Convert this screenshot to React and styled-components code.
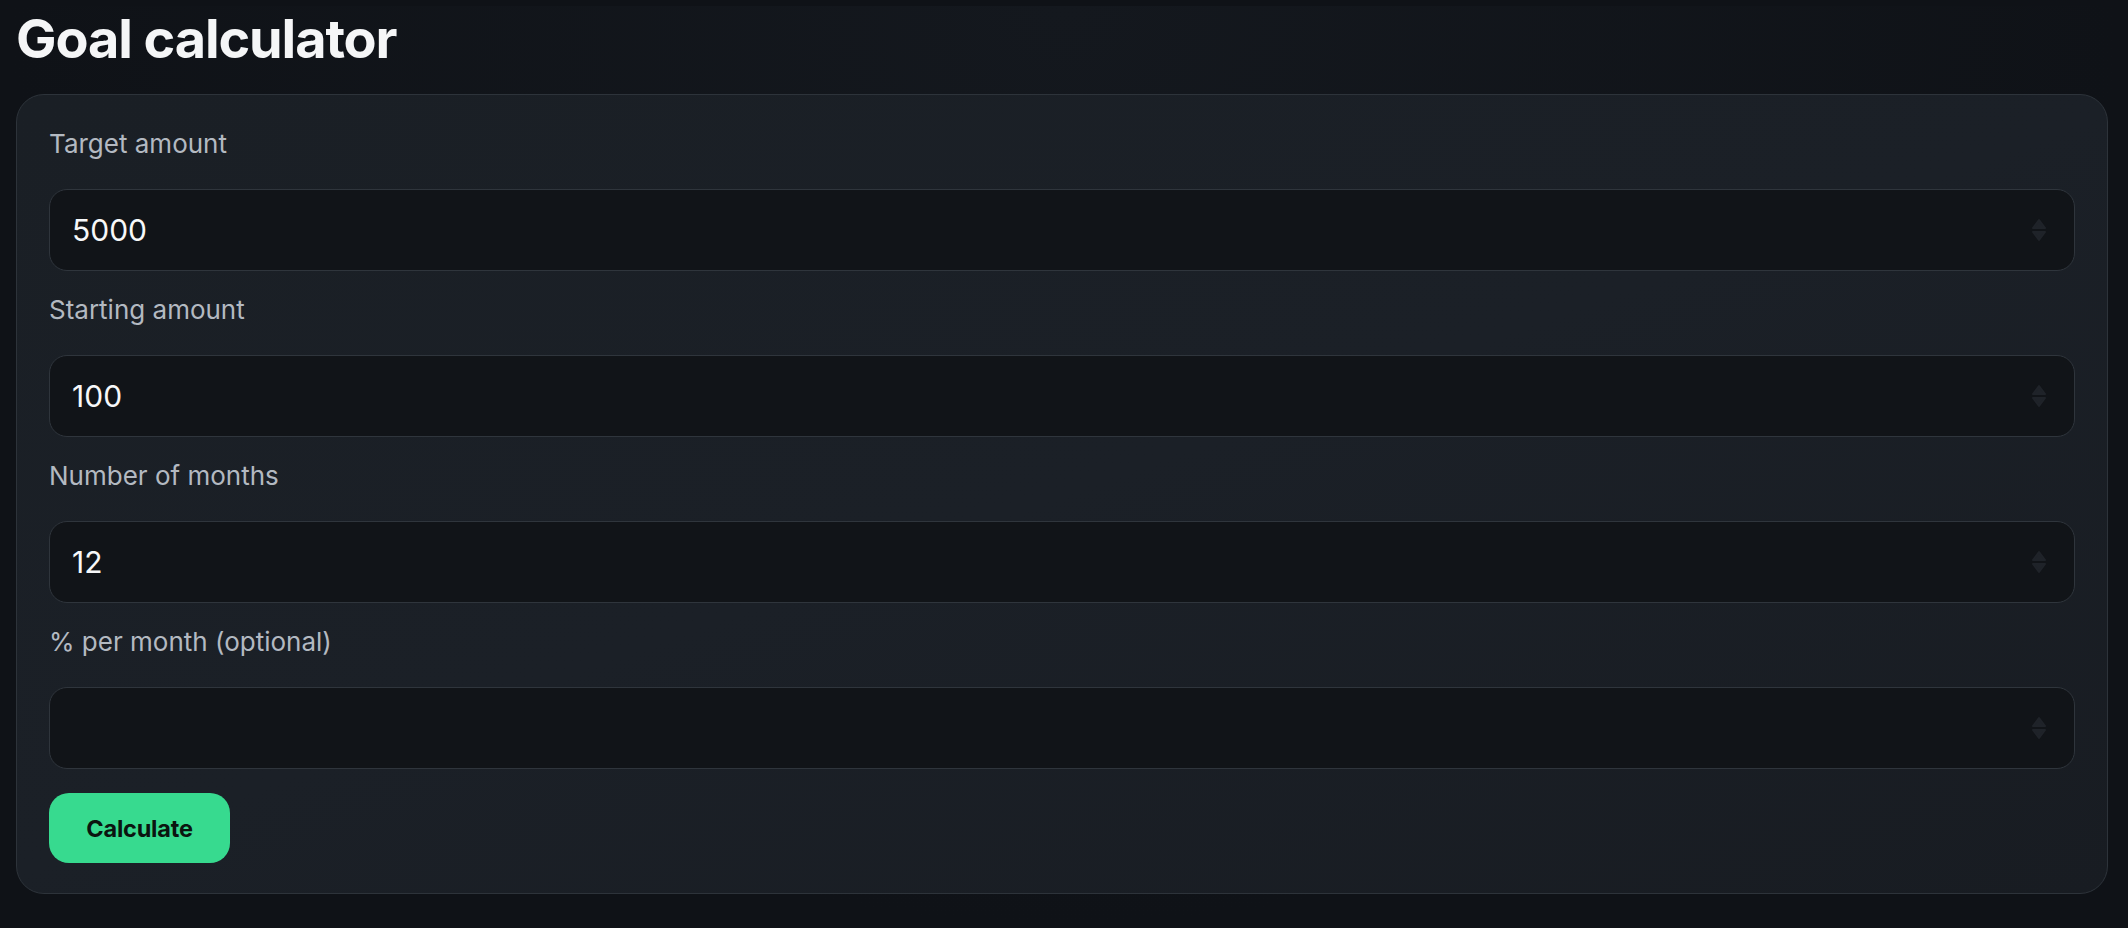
import React, { useState } from 'react';
import styled, { createGlobalStyle } from 'styled-components';

const GlobalStyle = createGlobalStyle`
  html, body {
    margin: 0;
    padding: 0;
    background: #0f1217;
  }
  body {
    font-family: Inter, "Noto Sans", "Liberation Sans", sans-serif;
    color: #f3f4f6;
    -webkit-font-smoothing: antialiased;
  }
  * {
    box-sizing: border-box;
  }
`;

const Page = styled.main`
  min-height: 928px;
  padding: 0 20px 0 16px;
  background: radial-gradient(ellipse at 50% 0%, #14181e 0%, #0f1217 70%);
`;

const Title = styled.h1`
  margin: 6px 0 23px;
  font-size: 54px;
  line-height: 65px;
  font-weight: 700;
  letter-spacing: -1.1px;
  color: #f5f6f7;
`;

const Card = styled.section`
  border: 1.5px solid #2d333a;
  border-radius: 28px;
  padding: 31px 32px 30px;
  background: linear-gradient(160deg, #1a1f25 0%, #1b2027 50%, #181c22 100%);
  display: flex;
  flex-direction: column;
`;

const Field = styled.div`
  display: flex;
  flex-direction: column;
  gap: 27px;
  margin-bottom: 21px;

  &:last-of-type {
    margin-bottom: 24px;
  }
`;

const Label = styled.label`
  font-size: 26px;
  line-height: 36px;
  color: #b3b9c1;
`;

const InputWrap = styled.div`
  position: relative;
`;

const Input = styled.input`
  width: 100%;
  height: 82px;
  padding: 0 60px 0 22px;
  border: 1.5px solid #2f353c;
  border-radius: 18px;
  background: #111418;
  color: #f7f8f9;
  font-family: inherit;
  font-size: 30px;
  outline: none;
  -moz-appearance: textfield;

  &::-webkit-outer-spin-button,
  &::-webkit-inner-spin-button {
    -webkit-appearance: none;
    margin: 0;
  }
`;

const Spinner = styled.svg`
  position: absolute;
  right: 28px;
  top: 50%;
  width: 16px;
  height: 26px;
  transform: translateY(-50%);
  pointer-events: none;
`;

const Button = styled.button`
  align-self: flex-start;
  width: 181px;
  height: 70px;
  border: none;
  border-radius: 20px;
  background: #37da8f;
  color: #0b1510;
  font-family: inherit;
  font-size: 23.5px;
  font-weight: 700;
  letter-spacing: -0.2px;
  cursor: pointer;
`;

const fields = [
  { id: 'target', label: 'Target amount', value: '5000' },
  { id: 'start', label: 'Starting amount', value: '100' },
  { id: 'months', label: 'Number of months', value: '12' },
  { id: 'rate', label: '% per month (optional)', value: '' },
];

const NumberField = ({ id, label, value, onChange }) => (
  <Field>
    <Label htmlFor={id}>{label}</Label>
    <InputWrap>
      <Input id={id} type="number" value={value} onChange={e => onChange(id, e.target.value)} />
      <Spinner viewBox="0 0 16 26" fill="none">
        <path d="M2 11 L8 3 L14 11 Z" fill="#1f2329" stroke="#1f2329" strokeWidth="2" strokeLinejoin="round" />
        <path d="M2 15 L8 23 L14 15 Z" fill="#1f2329" stroke="#1f2329" strokeWidth="2" strokeLinejoin="round" />
      </Spinner>
    </InputWrap>
  </Field>
);

export default function App() {
  const [values, setValues] = useState(
    Object.fromEntries(fields.map(f => [f.id, f.value]))
  );

  const handleChange = (id, v) => setValues(prev => ({ ...prev, [id]: v }));

  return (
    <>
      <GlobalStyle />
      <Page>
        <Title>Goal calculator</Title>
        <Card>
          {fields.map(f => (
            <NumberField key={f.id} id={f.id} label={f.label} value={values[f.id]} onChange={handleChange} />
          ))}
          <Button type="button">Calculate</Button>
        </Card>
      </Page>
    </>
  );
}
